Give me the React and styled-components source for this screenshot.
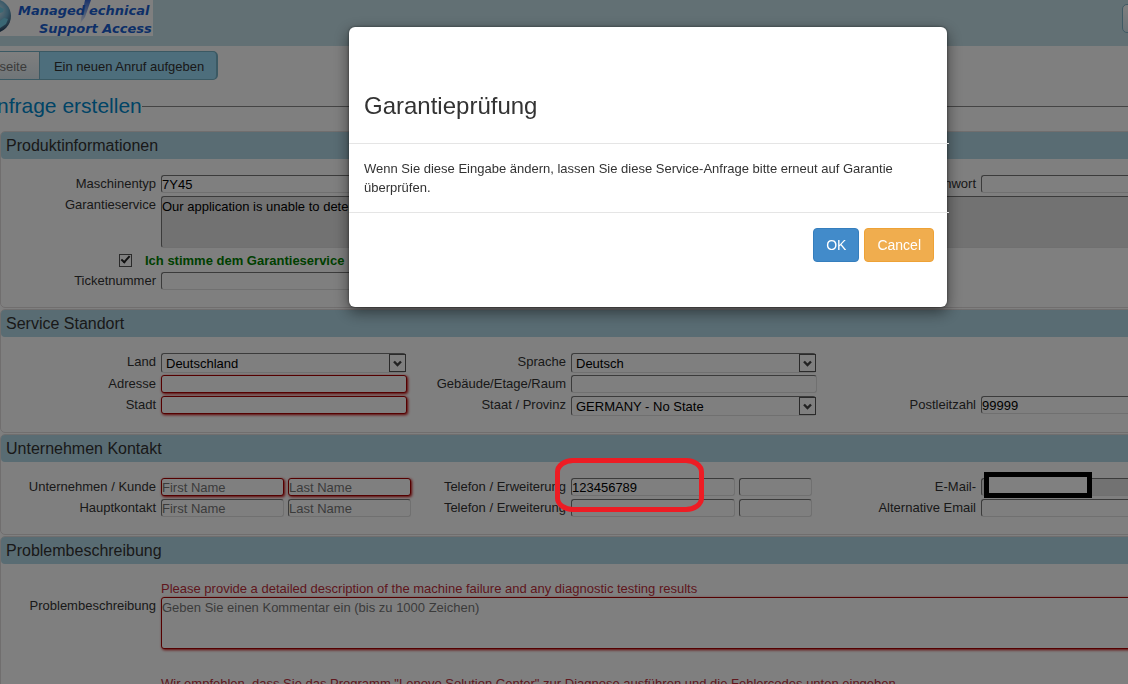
import React from 'react';
import styled, { createGlobalStyle, css } from 'styled-components';

const GlobalStyle = createGlobalStyle`
  *, *::before, *::after {
    box-sizing: border-box;
  }

  body {
    margin: 0;
    background: #fff;
    color: #333;
    font-family: 'Liberation Sans', Arial, sans-serif;
    font-size: 13px;
    line-height: 19px;
  }

  input, select, textarea, button {
    font: inherit;
  }
`;

const Page = styled.div`
  height: 100vh;
  overflow: hidden;
`;

const Header = styled.header`
  display: flex;
  justify-content: space-between;
  height: 46px;
  background: #c5e0e8;
  overflow: hidden;
`;

const HeaderButton = styled.button`
  flex: none;
  width: 46px;
  height: 29px;
  margin: 4px -40px 0 0;
  border: 1px solid #7fb5c8;
  border-radius: 5px;
  background: linear-gradient(#fff, #d5e6ee);
`;

const Breadcrumb = styled.nav`
  display: flex;
  margin: 5px 0 0 -43px;
`;

const Crumb = styled.a`
  height: 29px;
  padding: 5px 12px 5px 14px;
  border: 1px solid #76b2c6;
  background: ${({ $active }) => ($active ? '#9bdcf8' : 'linear-gradient(#fff, #dfebf1)')};
  color: ${({ $active }) => ($active ? '#333' : '#777')};
  text-decoration: none;

  &:last-child {
    margin-left: -1px;
    border-right-width: 2px;
    border-radius: 0 5px 5px 0;
  }
`;

const PageTitle = styled.h1`
  display: flex;
  align-items: center;
  margin: 12px 0 11px -17px;
  color: #08c;
  font-size: 21px;
  font-weight: normal;
  line-height: 28px;

  &::after {
    content: '';
    flex: 1;
    border-top: 1px solid #888;
  }
`;

const Panel = styled.section`
  min-width: 1236px;
  margin-bottom: 1px;
  padding-bottom: 14px;
  border: 1px solid #e0dcdd;
  border-radius: 5px;
`;

const PanelTitle = styled.h2`
  margin: 0 0 16px;
  padding: 0 5px;
  border-radius: 4px;
  background: #b2d8e6;
  font-size: 16px;
  font-weight: normal;
  line-height: 27px;
`;

const Row = styled.div`
  display: flex;
  align-items: flex-start;
  min-height: ${({ $tall }) => ($tall ? 22 : 21)}px;
`;

const Field = styled.div`
  display: flex;
  align-items: flex-start;
  gap: 4px;
  flex: ${({ $wide }) => ($wide ? '1' : '0 0 410px')};
  position: relative;
`;

const Label = styled.label`
  flex: 0 0 156px;
  padding-right: 1px;
  text-align: right;
  line-height: 18px;
`;

const invalid = css`
  border-color: #a80000;
  box-shadow: 1px 1px 3px #c00000;
`;

const control = css`
  flex: none;
  height: ${({ $height }) => $height || 18}px;
  width: ${({ $width }) => $width || 246}px;
  padding: 0;
  border: 1px solid;
  border-color: #777 #e0e0e0 #e0e0e0 #777;
  border-radius: 3px;
  background: ${({ readOnly }) => (readOnly ? '#e4e4e4' : '#fff')};
  color: #000;
  ${({ $invalid }) => $invalid && invalid}

  &::placeholder {
    color: #777;
    opacity: 1;
  }
`;

const Input = styled.input`
  ${control}
`;

const TextArea = styled.textarea`
  ${control}
  flex: 1;
  resize: none;
`;

const SelectBox = styled.div`
  display: flex;
  position: relative;
  flex: none;

  svg {
    position: absolute;
    top: 1px;
    right: 0;
    pointer-events: none;
  }
`;

const SelectControl = styled.select`
  ${control}
  appearance: none;
  padding: 0 4px;
`;

const AgreeRow = styled(Row)`
  align-items: center;
  gap: 13px;
  height: 24px;
  padding-left: 118px;
`;

const Checkbox = styled.input`
  appearance: none;
  display: grid;
  place-items: center;
  width: 13px;
  height: 13px;
  margin: 0;
  border: 1px solid #555;
  background: #fff;

  &:checked::after {
    content: '';
    width: 5px;
    height: 9px;
    margin-top: -3px;
    border: solid #222;
    border-width: 0 2px 2px 0;
    transform: rotate(42deg);
  }
`;

const AgreeLabel = styled.label`
  color: #008000;
  font-weight: bold;
`;

const Hint = styled.p`
  margin: 0 0 0 160px;
  color: #c0303c;
  line-height: 17px;
`;

const Spacer = styled.div`
  height: 26px;
`;

const Highlight = styled.div`
  position: absolute;
  top: -20px;
  left: 144px;
  z-index: 2;
  width: 149px;
  height: 54px;
  border: 5px solid #ed1c24;
  border-radius: 18px / 14px;
`;

const Redaction = styled.div`
  position: absolute;
  top: -6px;
  left: 163px;
  z-index: 2;
  width: 108px;
  height: 26px;
  border: 5px solid #000;
  background: #808080;
`;

const Backdrop = styled.div`
  position: fixed;
  inset: 0;
  z-index: 1;
  display: flex;
  justify-content: center;
  align-items: flex-start;
  padding: 27px 0 0 168px;
  background: rgba(0, 0, 0, 0.5);
`;

const Dialog = styled.div`
  width: 598px;
  padding: 50px 0 30px;
  border-radius: 6px;
  background: #fff;
  box-shadow: 0 5px 15px rgba(0, 0, 0, 0.5), 0 0 3px rgba(0, 0, 0, 0.5);
`;

const DialogTitle = styled.h3`
  margin: 0 -2px 0 0;
  padding: 11px 15px 19px;
  border-bottom: 1px solid #e5e5e5;
  font-size: 24px;
  font-weight: normal;
  line-height: 36px;
`;

const DialogText = styled.p`
  margin: 0;
  padding: 15px 40px 15px 15px;
`;

const DialogFooter = styled.div`
  display: flex;
  justify-content: flex-end;
  gap: 5px;
  margin-right: -2px;
  padding: 15px;
  border-top: 1px solid #e5e5e5;
`;

const Button = styled.button`
  padding: 6px 12px;
  border: 1px solid ${({ $primary }) => ($primary ? '#357ebd' : '#eea236')};
  border-radius: 4px;
  background: ${({ $primary }) => ($primary ? '#428bca' : '#f0ad4e')};
  color: #fff;
  font-size: 14px;
  line-height: 20px;
`;

const LogoText = styled.text`
  fill: #1b5fd0;
  font-family: 'DejaVu Sans', Verdana, sans-serif;
  font-size: 13px;
  font-style: italic;
  font-weight: bold;
`;

const Logo = () => (
  <svg width="153" height="36" viewBox="0 0 153 36" role="img" aria-label="Managed Technical Support Access">
    <defs>
      <radialGradient id="globe" cx="0.55" cy="0.35" r="0.6">
        <stop offset="0" stopColor="#e6f4fa" />
        <stop offset="0.6" stopColor="#6fb0d0" />
        <stop offset="1" stopColor="#2d4a66" />
      </radialGradient>
      <linearGradient id="beam" x1="0" y1="0" x2="0" y2="1">
        <stop offset="0" stopColor="#3a6ad8" />
        <stop offset="1" stopColor="#eef2fc" />
      </linearGradient>
    </defs>
    <rect width="153" height="36" fill="#fff" />
    <circle cx="-6" cy="16" r="17" fill="url(#globe)" />
    <path d="M0 7l4 2-1 3-3 1zM0 21l4-3 4 1-2 5-6 4z" fill="#75cfe8" />
    <path d="M85 0h6l-6 17-5 7z" fill="url(#beam)" />
    <LogoText x="18" y="15">Managed</LogoText>
    <LogoText x="89" y="15">echnical</LogoText>
    <LogoText x="39" y="33">Support Access</LogoText>
  </svg>
);

const TextField = ({ id, label, children, ...rest }) => (
  <Field>
    <Label htmlFor={id}>{label}</Label>
    <Input id={id} {...rest} />
    {children}
  </Field>
);

const SelectField = ({ id, label, value }) => (
  <Field>
    <Label htmlFor={id}>{label}</Label>
    <SelectBox>
      <SelectControl id={id} $height={20} $width={245}>
        <option>{value}</option>
      </SelectControl>
      <svg width="17" height="18" viewBox="0 0 17 18">
        <rect x="0.5" y="0.5" width="16" height="17" fill="#fff" stroke="#555" />
        <path d="M5 7.5l3.5 3.5L12 7.5" fill="none" stroke="#444" strokeWidth="2.4" />
      </svg>
    </SelectBox>
  </Field>
);

const App = () => {
  return (
    <>
      <GlobalStyle />
      <Page>
        <Header>
          <Logo />
          <HeaderButton aria-label="Menü" />
        </Header>
        <Breadcrumb>
          <Crumb href="#start">Startseite</Crumb>
          <Crumb href="#anruf" $active>Ein neuen Anruf aufgeben</Crumb>
        </Breadcrumb>
        <PageTitle>Anfrage erstellen</PageTitle>

        <Panel>
          <PanelTitle>Produktinformationen</PanelTitle>
          <Row>
            <TextField id="type" label="Maschinentyp" defaultValue="7Y45" />
            <Field />
            <TextField id="password" label="Kennwort" />
          </Row>
          <Row>
            <Field $wide>
              <Label htmlFor="warranty">Garantieservice</Label>
              <TextArea id="warranty" $height={52} readOnly defaultValue="Our application is unable to determine warranty" />
            </Field>
          </Row>
          <AgreeRow>
            <Checkbox type="checkbox" id="agree" defaultChecked />
            <AgreeLabel htmlFor="agree">Ich stimme dem Garantieservice</AgreeLabel>
          </AgreeRow>
          <Row>
            <TextField id="ticket" label="Ticketnummer" />
          </Row>
        </Panel>

        <Panel>
          <PanelTitle>Service Standort</PanelTitle>
          <Row $tall>
            <SelectField id="country" label="Land" value="Deutschland" />
            <SelectField id="language" label="Sprache" value="Deutsch" />
          </Row>
          <Row>
            <TextField id="address" label="Adresse" $invalid />
            <TextField id="building" label="Gebäude/Etage/Raum" />
          </Row>
          <Row $tall>
            <TextField id="city" label="Stadt" $invalid />
            <SelectField id="state" label="Staat / Provinz" value="GERMANY - No State" />
            <TextField id="zip" label="Postleitzahl" defaultValue="99999" />
          </Row>
        </Panel>

        <Panel>
          <PanelTitle>Unternehmen Kontakt</PanelTitle>
          <Row>
            <TextField id="customer" label="Unternehmen / Kunde" placeholder="First Name" $width={123} $invalid>
              <Input aria-label="Last Name" placeholder="Last Name" $width={123} $invalid />
            </TextField>
            <TextField id="phone" label="Telefon / Erweiterung" defaultValue="123456789" $width={164}>
              <Input aria-label="Erweiterung" $width={73} />
              <Highlight />
            </TextField>
            <TextField id="email" label="E-Mail-" readOnly>
              <Redaction />
            </TextField>
          </Row>
          <Row>
            <TextField id="contact" label="Hauptkontakt" placeholder="First Name" $width={123}>
              <Input aria-label="Last Name" placeholder="Last Name" $width={123} />
            </TextField>
            <TextField id="phone2" label="Telefon / Erweiterung" $width={164}>
              <Input aria-label="Erweiterung" $width={73} />
            </TextField>
            <TextField id="email2" label="Alternative Email" />
          </Row>
        </Panel>

        <Panel>
          <PanelTitle>Problembeschreibung</PanelTitle>
          <Hint>Please provide a detailed description of the machine failure and any diagnostic testing results</Hint>
          <Row>
            <Field $wide>
              <Label htmlFor="problem">Problembeschreibung</Label>
              <TextArea id="problem" $height={52} $invalid placeholder="Geben Sie einen Kommentar ein (bis zu 1000 Zeichen)" />
            </Field>
          </Row>
          <Spacer />
          <Hint>
            Wir empfehlen, dass Sie das Programm "Lenovo Solution Center" zur Diagnose ausführen und die Fehlercodes unten eingeben
          </Hint>
        </Panel>
      </Page>

      <Backdrop>
        <Dialog role="dialog" aria-modal="true" aria-labelledby="dialog-title">
          <DialogTitle id="dialog-title">Garantieprüfung</DialogTitle>
          <DialogText>
            Wenn Sie diese Eingabe ändern, lassen Sie diese Service-Anfrage bitte erneut auf Garantie überprüfen.
          </DialogText>
          <DialogFooter>
            <Button type="button" $primary>OK</Button>
            <Button type="button">Cancel</Button>
          </DialogFooter>
        </Dialog>
      </Backdrop>
    </>
  );
};

export default App;
